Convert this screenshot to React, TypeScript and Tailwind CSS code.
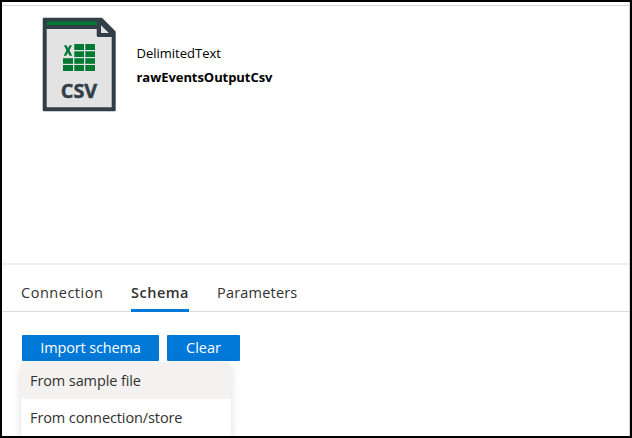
import React from 'react';

const cells: [number, number, number, number][] = [
  [74.3, 44, 9.7, 6], [85.3, 44, 9.7, 6],
  [74.3, 51.3, 9.7, 5.7], [85.3, 51.3, 9.7, 5.7],
  [63, 58.2, 10, 5.6], [74.3, 58.2, 9.7, 5.6], [85.3, 58.2, 9.7, 5.6],
  [63, 65, 10, 6], [74.3, 65, 9.7, 6], [85.3, 65, 9.7, 6],
];

function CsvIcon() {
  return (
    <svg className="h-[98px] w-[80px] shrink-0" viewBox="40 16 80 98">
      <path d="M44 17.8H102L115.7 31.5V110a1.2 1.2 0 0 1-1.2 1.2H44a1.3 1.3 0 0 1-1.3-1.3V19a1.3 1.3 0 0 1 1.3-1.2Z" fill="#333f48" />
      <path d="M46.7 29H96.7V35.4a1.6 1.6 0 0 0 1.6 1.6H111.7V107.3H46.7Z" fill="#e3e3e3" />
      <path d="M46.7 21.4H96.7V25H46.7Z" fill="#007a33" />
      <path d="M101 25.2V33H108.8Z" fill="#e3e3e3" />
      {cells.map(([x, y, w, h], i) => <rect key={i} x={x} y={y} width={w} height={h} fill="#007a33" />)}
      <path d="M63.9 45.2h2.7l1.5 3 1.4-3h2.5l-2.5 5.1 2.7 5.4h-2.7l-1.6-3.3-1.6 3.3h-2.6l2.7-5.4Z" fill="#007a33" />
      <text x="60.8" y="97.8" textLength="36.4" lengthAdjust="spacingAndGlyphs" fontFamily="'Open Sans', sans-serif" fontWeight="700" fontSize="19.2" fill="#333f48" stroke="#333f48" strokeWidth="0.45">CSV</text>
    </svg>
  );
}

export default function App() {
  return (
    <div className="flex h-[438px] w-[632px] flex-col overflow-hidden border-2 border-black bg-white font-['Open_Sans','Noto_Sans',sans-serif] text-[#323130]">
      <div className="flex min-h-0 flex-1 flex-col border-r border-[#d8d8d8]">
        <div className="mt-[3px] h-px shrink-0 bg-[#d6d6d6]" />
        <header className="flex h-[257px] shrink-0 items-start pt-[10px] pl-[38px] text-black">
          <CsvIcon />
          <div className="flex flex-col pt-[25px] pl-[16.5px] text-[13px] leading-6 whitespace-nowrap">
            <span className="tracking-[0px]">DelimitedText</span>
            <span className="font-bold tracking-[-0.06px]">rawEventsOutputCsv</span>
          </div>
        </header>
        <div className="h-[2px] shrink-0 bg-[#eeeeee]" />
        <nav className="flex h-[47px] shrink-0 items-stretch border-b border-[#dddddd] pl-[19px] text-[14.5px] leading-[22px] whitespace-nowrap">
          <div className="w-[110px] pt-[17px] tracking-[0.52px]">Connection</div>
          <div className="-mb-px w-[58px] border-b-[3px] border-[#0078d7] pt-[17px] font-semibold tracking-[0.5px]">Schema</div>
          <div className="ml-[28px] pt-[17px] tracking-[0.2px]">Parameters</div>
        </nav>
        <main className="flex min-h-0 flex-1 flex-col pt-[23px] pl-[19px] text-[14.5px]">
          <div className="flex shrink-0 gap-2 pl-px leading-[25px] whitespace-nowrap text-white">
            <button className="h-[26px] w-[137px] rounded-[1px] bg-[#0078d7] pb-px tracking-[-0.15px]">Import schema</button>
            <button className="h-[26px] w-[73px] rounded-[1px] bg-[#0078d7] pb-px">Clear</button>
          </div>
          <div className="mt-px w-[210px] shrink-0 rounded-t-[5px] bg-white leading-[37px] tracking-[-0.1px] whitespace-nowrap shadow-[0_4px_10px_rgba(0,0,0,0.14)]">
            <div className="h-[37px] rounded-t-[5px] bg-[#f3f2f1] pl-[9px]">From sample file</div>
            <div className="h-[37px] pl-[9px]">From connection/store</div>
          </div>
        </main>
      </div>
    </div>
  );
}
